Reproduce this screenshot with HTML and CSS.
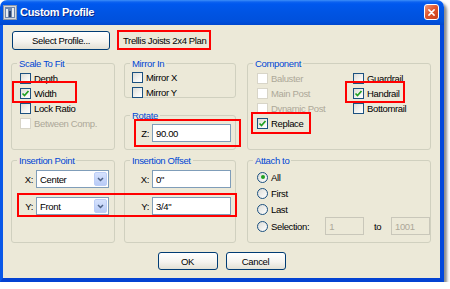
FILE: index.html
```html
<!DOCTYPE html>
<html lang="en">
<head>
  <meta charset="UTF-8" />
  <title>Custom Profile</title>
  <link rel="stylesheet" href="styles.css">
</head>
<body>
  <div class="window">
    <div class="titlebar">
      <svg class="app-icon" viewBox="0 0 14 15">
        <rect x="0.5" y="0.5" width="13" height="14" fill="#d4d6dc" stroke="#8d99ab"/>
        <rect x="2" y="2" width="10" height="11" fill="#6d87ad"/>
        <rect x="3" y="4" width="2" height="8" fill="#e8ecf2"/>
        <rect x="6" y="6" width="2" height="6" fill="#2d3f66"/>
        <rect x="9" y="3" width="2" height="9" fill="#e8ecf2"/>
      </svg>
      <span class="title">Custom Profile</span>
      <span class="close">
        <svg viewBox="0 0 15 15"><path d="M4.5 4.5l6 6M10.5 4.5l-6 6" stroke="#fff" stroke-width="1.8" stroke-linecap="round"/></svg>
      </span>
    </div>

    <div class="frame">
      <div class="top-row">
        <button class="btn btn-select">Select Profile...</button>
        <span class="profile-name">Trellis Joists 2x4 Plan</span>
      </div>

      <div class="groups">
        <fieldset class="group g-scale">
          <legend>Scale To Fit</legend>
          <div class="group-body">
            <div class="check"><span class="box"></span>Depth</div>
            <div class="check mark mark-width"><span class="box checked"><svg viewBox="0 0 9 9"><path d="M1.5 4.5l2 2 4-4.5" /></svg></span>Width</div>
            <div class="check"><span class="box"></span>Lock Ratio</div>
            <div class="check disabled"><span class="box"></span>Between Comp.</div>
          </div>
        </fieldset>

        <div class="stack">
          <fieldset class="group g-mirror">
            <legend>Mirror In</legend>
            <div class="group-body">
              <div class="check"><span class="box"></span>Mirror X</div>
              <div class="check"><span class="box"></span>Mirror Y</div>
            </div>
          </fieldset>
          <fieldset class="group g-rotate">
            <legend>Rotate</legend>
            <div class="group-body">
              <div class="field-row mark mark-rotate">
                <label>Z:</label>
                <input class="field" type="text" value="90.00" readonly>
              </div>
            </div>
          </fieldset>
        </div>

        <fieldset class="group g-component">
          <legend>Component</legend>
          <div class="group-body">
            <div class="check disabled"><span class="box"></span>Baluster</div>
            <div class="check"><span class="box"></span>Guardrail</div>
            <div class="check disabled"><span class="box"></span>Main Post</div>
            <div class="check mark mark-handrail"><span class="box checked"><svg viewBox="0 0 9 9"><path d="M1.5 4.5l2 2 4-4.5" /></svg></span>Handrail</div>
            <div class="check disabled"><span class="box"></span>Dynamic Post</div>
            <div class="check"><span class="box"></span>Bottomrail</div>
            <div class="check mark mark-replace"><span class="box checked"><svg viewBox="0 0 9 9"><path d="M1.5 4.5l2 2 4-4.5" /></svg></span>Replace</div>
          </div>
        </fieldset>

        <fieldset class="group g-point">
          <legend>Insertion Point</legend>
          <div class="group-body">
            <div class="field-row">
              <label>X:</label>
              <div class="combo">Center<span class="combo-btn"><svg viewBox="0 0 7 5"><path d="M1 1l2.5 2.5L6 1" /></svg></span></div>
            </div>
            <div class="field-row">
              <label>Y:</label>
              <div class="combo">Front<span class="combo-btn"><svg viewBox="0 0 7 5"><path d="M1 1l2.5 2.5L6 1" /></svg></span></div>
            </div>
          </div>
        </fieldset>

        <fieldset class="group g-offset">
          <legend>Insertion Offset</legend>
          <div class="group-body">
            <div class="field-row">
              <label>X:</label>
              <input class="field" type="text" value="0&quot;" readonly>
            </div>
            <div class="field-row">
              <label>Y:</label>
              <input class="field" type="text" value="3/4&quot;" readonly>
            </div>
          </div>
        </fieldset>

        <fieldset class="group g-attach">
          <legend>Attach to</legend>
          <div class="group-body">
            <div class="radio on"><span class="dot"></span>All</div>
            <div class="radio"><span class="dot"></span>First</div>
            <div class="radio"><span class="dot"></span>Last</div>
            <div class="radio sel-row">
              <span class="dot"></span>
              <span class="sel-label">Selection:</span>
              <input class="field small" type="text" value="1" disabled>
              <span class="to">to</span>
              <input class="field small" type="text" value="1001" disabled>
            </div>
          </div>
        </fieldset>
      </div>

      <div class="actions">
        <button class="btn btn-action">OK</button>
        <button class="btn btn-action">Cancel</button>
      </div>
    </div>

    <div class="mark-yrow"></div>
  </div>
</body>
</html>
```

FILE: styles.css
```css
* {
  box-sizing: border-box;
}
body {
  margin: 0;
  background: #fff;
  font-family: "Liberation Sans", Arial, sans-serif;
  font-size: 9.5px;
  letter-spacing: -0.35px;
  color: #000;
}
.window {
  position: relative;
  width: 444px;
  height: 282px;
  display: flex;
  flex-direction: column;
  border-radius: 7px 7px 0 0;
  box-shadow: 3px 3px 3px rgba(0,0,0,0.45);
}
.titlebar {
  height: 25px;
  display: flex;
  align-items: center;
  padding: 0 6px 1px 3px;
  border-radius: 7px 7px 0 0;
  background: linear-gradient(#3d8ff8 0, #0d62f0 2px, #0058ee 4px, #0054e3 50%, #0050dc 85%, #0047cf 100%);
  color: #fff;
}
.app-icon {
  width: 14px;
  height: 15px;
  margin-right: 3px;
}
.title {
  flex: 1;
  font-size: 11px;
  font-weight: bold;
  letter-spacing: -0.3px;
  text-shadow: 1px 1px #0a2a8c;
}
.close {
  width: 15px;
  height: 16px;
  margin-right: -1px;
  border: 1px solid #fff;
  border-radius: 3px;
  background: linear-gradient(135deg, #ef9a7c, #e0572f 45%, #c83e19);
  display: grid;
  place-items: center;
}
.close svg {
  width: 13px;
  height: 13px;
}
.frame {
  flex: 1;
  display: flex;
  flex-direction: column;
  background: #ece9d8;
  border-left: 3px solid #0a58e8;
  border-right: 4px solid #0348dc;
  border-bottom: 4px solid #0342d2;
}
.top-row {
  display: flex;
  align-items: center;
  padding: 5px 0 0 9px;
}
.btn {
  font: inherit;
  letter-spacing: inherit;
  color: #000;
  padding: 0;
  border: 1px solid #003c74;
  border-radius: 3px;
  background: linear-gradient(#fff, #f5f4ef 55%, #e2e0d5);
}
.btn-select {
  width: 98px;
  height: 19px;
}
.profile-name {
  margin-left: 7px;
  height: 20px;
  padding: 0 3px 0 4px;
  border: 2px solid #f00;
  display: flex;
  align-items: center;
}

.groups {
  display: grid;
  grid-template-columns: 104px 112px 186px;
  grid-template-rows: 92px 88px;
  column-gap: 9px;
  row-gap: 5px;
  margin: 8px 0 0 8px;
}
.group {
  margin: 0;
  padding: 0;
  min-width: 0;
  border: 1px solid #d0d0bf;
  border-radius: 3px;
}
.g-component,
.g-attach {
  margin-left: 2px;
}
.group legend {
  margin-left: 5px;
  padding: 0 2px;
  line-height: 11px;
  color: #0046d5;
}
.group-body {
  padding: 2px 0 0 8px;
}
.stack {
  display: flex;
  flex-direction: column;
  justify-content: space-between;
}
.g-mirror {
  height: 40px;
}
.g-mirror .group-body {
  padding: 1px 0 0 7px;
}
.g-rotate {
  height: 40px;
}
.g-component .group-body {
  display: grid;
  grid-template-columns: 96px 1fr;
  padding-left: 9px;
}

.check {
  position: relative;
  display: flex;
  align-items: center;
  height: 15px;
  gap: 3px;
}
.box {
  flex: none;
  width: 11px;
  height: 11px;
  border: 1px solid #1c5180;
  background: linear-gradient(135deg, #dcdcd7, #f4f4f1 60%, #fff);
  display: grid;
  place-items: center;
}
.box svg {
  width: 9px;
  height: 9px;
}
.box path {
  fill: none;
  stroke: #21a121;
  stroke-width: 1.7;
}
.check.disabled {
  color: #aca899;
}
.check.disabled .box {
  border-color: #d8d5c8;
  background: #fff;
}

.mark::after {
  content: "";
  position: absolute;
  border: 2px solid #f00;
}
.mark-width {
  width: 46px;
}
.mark-width::after {
  inset: -5px -11px -2px -8px;
}
.mark-handrail {
  width: 46px;
}
.mark-handrail::after {
  inset: -5px -6px -2px -8px;
}
.mark-replace {
  width: 46px;
  grid-column: 1;
}
.mark-replace::after {
  inset: -4px -8px -3px -6px;
}

.field-row {
  position: relative;
  display: flex;
  align-items: center;
  height: 18px;
}
.field-row label {
  width: 27px;
  padding-right: 3px;
  text-align: right;
}
.g-rotate .group-body {
  padding: 3px 0 0 0;
}
.mark-rotate::after {
  inset: -5px -6px -5px 9px;
}
.field {
  width: 79px;
  height: 18px;
  margin: 0;
  padding: 0 3px;
  font: inherit;
  letter-spacing: inherit;
  color: #000;
  border: 1px solid #7f9db9;
  background: #fff;
  outline: none;
}
.g-point .group-body,
.g-offset .group-body {
  display: flex;
  flex-direction: column;
  gap: 9px;
  padding: 4px 0 0 0;
}
.g-point .field-row label {
  width: 24px;
}
.combo {
  width: 73px;
  height: 18px;
  display: flex;
  align-items: center;
  padding: 0 1px 0 3px;
  border: 1px solid #7f9db9;
  background: #fff;
}
.combo-btn {
  margin-left: auto;
  width: 13px;
  height: 14px;
  border: 1px solid #bccef7;
  border-radius: 2px;
  background: linear-gradient(#d6e2fd, #b8cbf6);
  display: grid;
  place-items: center;
}
.combo-btn svg {
  width: 7px;
  height: 5px;
}
.combo-btn path {
  fill: none;
  stroke: #4d6185;
  stroke-width: 1.5;
}

.g-attach .group-body {
  padding: 3px 0 0 9px;
}
.radio {
  display: flex;
  align-items: center;
  height: 16px;
  gap: 3px;
}
.dot {
  flex: none;
  width: 11px;
  height: 11px;
  border-radius: 50%;
  border: 1px solid #1c5180;
  background: linear-gradient(135deg, #dcdcd7, #fff);
  display: grid;
  place-items: center;
}
.radio.on .dot::after {
  content: "";
  width: 4px;
  height: 4px;
  border-radius: 50%;
  background: #21a121;
}
.sel-row {
  height: 18px;
}
.sel-label {
  width: 54px;
}
.field.small {
  width: 39px;
  color: #aca899;
  background: #ece9d8;
  border-color: #c9c7ba;
}
.to {
  width: 22px;
  text-align: center;
}

.actions {
  display: flex;
  justify-content: center;
  gap: 8px;
  margin-top: 9px;
}
.btn-action {
  width: 60px;
  height: 18px;
}

.mark-yrow {
  position: absolute;
  left: 17px;
  top: 193px;
  width: 220px;
  height: 24px;
  border: 2px solid #f00;
}
```
